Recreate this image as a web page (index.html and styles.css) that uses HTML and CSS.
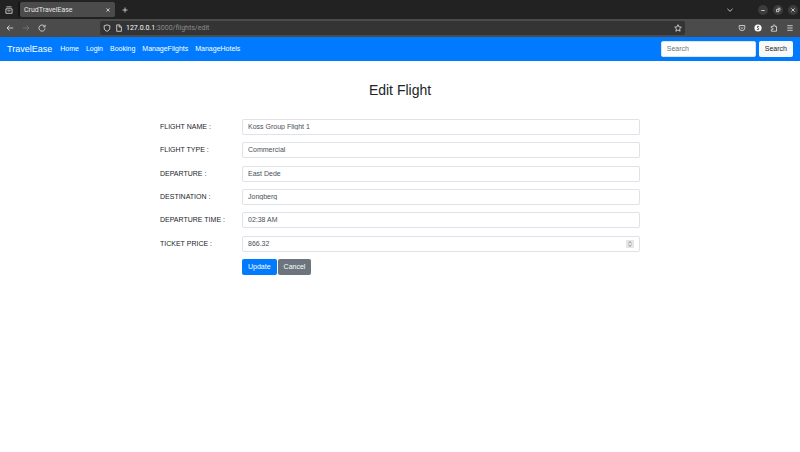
FILE: index.html
```html
<!DOCTYPE html>
<html lang="en">
<head>
<meta charset="utf-8">
<meta name="viewport" content="width=device-width, initial-scale=1">
<title>CrudTravelEase</title>
<link rel="stylesheet" href="styles.css">
</head>
<body>
<header class="browser">
  <div class="tabbar">
    <button class="icon-btn" aria-label="Recent browsing"><svg viewBox="0 0 10 10"><path d="M2.400 1.900h5.200M1.900 3.800h6.200v4.500H1.900zM3.800 5.300v.6h2.400v-.6"/></svg></button>
    <div class="tab"><span>CrudTravelEase</span><button class="icon-btn" aria-label="Close tab"><svg viewBox="0 0 10 10"><path d="M3.400 3.400l3.200 3.200M6.600 3.400L3.400 6.600"/></svg></button></div>
    <button class="icon-btn" aria-label="New tab"><svg viewBox="0 0 10 10"><path d="M5 2.500v5M2.500 5h5"/></svg></button>
    <button class="icon-btn list-tabs" aria-label="List all tabs"><svg viewBox="0 0 10 10"><path d="M2.400 3.800L5 6.300l2.600-2.500"/></svg></button>
    <div class="window-controls">
      <button class="icon-btn round" aria-label="Minimize"><svg viewBox="0 0 10 10"><path d="M3.200 5.500h3.600"/></svg></button>
      <button class="icon-btn round" aria-label="Restore"><svg viewBox="0 0 10 10"><path d="M3.500 4.400h2.300v2.300H3.500zM4.600 3.200h2.300v2.300"/></svg></button>
      <button class="icon-btn round" aria-label="Close"><svg viewBox="0 0 10 10"><path d="M3.400 3.400l3.200 3.200M6.600 3.400L3.400 6.600"/></svg></button>
    </div>
  </div>
  <div class="toolbar">
    <div class="history">
      <button class="icon-btn" aria-label="Back"><svg viewBox="0 0 10 10"><path d="M8.200 5H2M4.600 2.400L2 5l2.600 2.600"/></svg></button>
      <button class="icon-btn dim" aria-label="Forward"><svg viewBox="0 0 10 10"><path d="M1.800 5H8M5.400 2.400L8 5 5.400 7.600"/></svg></button>
      <button class="icon-btn" aria-label="Reload"><svg viewBox="0 0 10 10"><path d="M7.700 3.500A3.100 3.100 0 1 0 8.100 5.500M8.100 1.800v2.100H6"/></svg></button>
    </div>
    <div class="address">
      <svg viewBox="0 0 10 10"><path d="M5 1.900l2.800.8v2.200C7.800 6.600 6.800 7.700 5 8.300 3.200 7.700 2.200 6.600 2.200 4.900V2.700z"/></svg>
      <svg viewBox="0 0 10 10"><path d="M2.700 1.900h2.700L7.400 3.800v4.500H2.700zM5.200 2v2h2"/></svg>
      <span class="url"><b>127.0.0.1</b>:3000/flights/edit</span>
      <button class="icon-btn" aria-label="Bookmark this page"><svg viewBox="0 0 10 10"><path d="M5 1.700l1 2.200 2.300.3-1.700 1.600.5 2.400L5 7 2.900 8.200l.5-2.400L1.700 4.200l2.300-.3z"/></svg></button>
    </div>
    <div class="extras">
      <button class="icon-btn" aria-label="Save to Pocket"><svg viewBox="0 0 10 10"><path d="M2.200 2.500h5.600v2.300a2.800 2.800 0 0 1-5.600 0zM3.700 4.400L5 5.600l1.300-1.200"/></svg></button>
      <button class="icon-btn" aria-label="Account"><svg viewBox="0 0 10 10"><circle class="disc" cx="5" cy="5" r="3.600"/><path class="mark" d="M6.200 3.500Q4 2.700 4 4.100L6 5.700Q6 7.200 3.800 6.400"/></svg></button>
      <button class="icon-btn" aria-label="Extensions"><svg viewBox="0 0 10 10"><path d="M2.300 8.200V6.700h.8a.9.900 0 0 0 0-1.800h-.8V3.500h1.900v-.8a.9.900 0 0 1 1.800 0v.8h1.500v4.700z"/></svg></button>
      <button class="icon-btn" aria-label="Menu"><svg viewBox="0 0 10 10"><path d="M2.300 2.700h5.400M2.300 5h5.400M2.300 7.300h5.400"/></svg></button>
    </div>
  </div>
</header>

<nav class="navbar">
  <a class="brand" href="#">TravelEase</a>
  <a href="#">Home</a>
  <a href="#">Login</a>
  <a href="#">Booking</a>
  <a href="#">ManageFlights</a>
  <a href="#">ManageHotels</a>
  <form class="search">
    <input class="control" type="search" placeholder="Search" aria-label="Search">
    <button class="btn btn-light" type="submit">Search</button>
  </form>
</nav>

<main>
  <h1>Edit Flight</h1>
  <form class="flight-form">
    <div class="row"><label for="name">FLIGHT NAME :</label><input class="control" id="name" type="text" value="Koss Group Flight 1"></div>
    <div class="row"><label for="type">FLIGHT TYPE :</label><input class="control" id="type" type="text" value="Commercial"></div>
    <div class="row"><label for="departure">DEPARTURE :</label><input class="control" id="departure" type="text" value="East Dede"></div>
    <div class="row"><label for="destination">DESTINATION :</label><input class="control" id="destination" type="text" value="Jongberg"></div>
    <div class="row"><label for="time">DEPARTURE TIME :</label><input class="control" id="time" type="text" value="02:38 AM"></div>
    <div class="row"><label for="price">TICKET PRICE :</label>
      <div class="number"><input class="control" id="price" type="number" step="0.01" value="866.32"><svg class="spinner" viewBox="0 0 8 8" aria-hidden="true"><path d="M2.500 3L4 1.700 5.500 3M2.500 5L4 6.300 5.500 5"/></svg></div>
    </div>
    <div class="actions"><button class="btn btn-primary" type="submit">Update</button><button class="btn btn-secondary" type="button">Cancel</button></div>
  </form>
</main>
</body>
</html>
```
FILE: styles.css
```css
* { box-sizing: border-box; }

body {
  margin: 0;
  background: #fff;
  color: #212529;
  font: 7px/10px "Liberation Sans", Arial, sans-serif;
}

button, input { font: inherit; margin: 0; }
a { color: inherit; text-decoration: none; }

/* Browser frame */
.browser { color: #e4e4e6; font-family: Roboto, "Noto Sans", sans-serif; }

.icon-btn {
  display: block;
  flex: none;
  width: 10px;
  height: 10px;
  padding: 0;
  border: 0;
  background: none;
  color: inherit;
}

.browser svg {
  display: block;
  flex: none;
  width: 10px;
  height: 10px;
  fill: none;
  stroke: currentColor;
  stroke-width: 0.8;
  stroke-linejoin: round;
}

.browser .disc { fill: #fff; stroke: none; }
.browser .mark { stroke: #333; }
.dim { opacity: 0.3; }

.tabbar {
  display: flex;
  align-items: center;
  height: 19px;
  padding: 0 2px 0 4px;
  background: #222;
}

.tab {
  display: flex;
  align-items: center;
  justify-content: space-between;
  width: 95px;
  height: 15px;
  margin: 0 5px 0 6px;
  padding: 0 2px 0 4px;
  border-radius: 2px;
  background: #4b4b4b;
  box-shadow: -2px 0 0 #151515;
}

.list-tabs { margin-left: auto; }
.window-controls { display: flex; gap: 5px; margin-left: 23px; }
.round { border-radius: 50%; background: #3c3c3c; }

.toolbar {
  display: flex;
  align-items: center;
  height: 18px;
  padding: 0 5px;
  background: #4b4b4b;
}

.history { display: flex; gap: 6px; width: 95px; }

.address {
  display: flex;
  align-items: center;
  gap: 2px;
  flex: 1;
  height: 14px;
  padding: 0 2px;
  border-radius: 2px;
  background: #343434;
}

.url { flex: 1; color: #8c8c8c; }
.url b { color: #fbfbfe; font-weight: 400; }
.extras { display: flex; gap: 6px; margin-left: 52px; }

/* Site navigation */
.navbar {
  display: flex;
  align-items: center;
  gap: 7px;
  height: 24px;
  padding: 0 7px;
  background: #007bff;
  color: #fff;
}

.brand { margin-right: 1px; font-size: 9px; }
.search { display: flex; gap: 3px; margin-left: auto; }
.search .control { width: 95px; }

/* Controls */
.control {
  display: block;
  width: 100%;
  height: 16px;
  padding: 0 5px 1px;
  border: 1px solid #dfe2e6;
  border-radius: 2px;
  background: #fff;
  color: #495057;
  line-height: 13px;
  appearance: none;
}

.control::placeholder { color: #6c757d; opacity: 1; line-height: 13px; }

.btn {
  height: 16px;
  padding: 0 6px;
  border: 0;
  border-radius: 2px;
  color: #fff;
}

.btn-light { background: #f8f9fa; color: #212529; }
.btn-primary { background: #007bff; }
.btn-secondary { background: #6c757d; }

/* Flight form */
main { width: 60%; margin: 0 auto; padding-top: 20px; }

h1 {
  margin: 0 0 20px;
  font-size: 14px;
  font-weight: 400;
  line-height: 18px;
  text-align: center;
}

.flight-form {
  display: grid;
  align-content: space-between;
  min-height: 156px;
}

.row {
  display: grid;
  grid-template-columns: 82px 1fr;
  align-items: center;
}

.number { position: relative; }
.number input { appearance: textfield; }
.number input::-webkit-inner-spin-button { appearance: none; margin: 0; }

.spinner {
  position: absolute;
  top: 4px;
  right: 6px;
  width: 8px;
  height: 8px;
  background: #e6e6e6;
  fill: none;
  stroke: #777;
  stroke-width: 0.8;
}

.actions { display: flex; gap: 1px; margin-left: 82px; }
```
